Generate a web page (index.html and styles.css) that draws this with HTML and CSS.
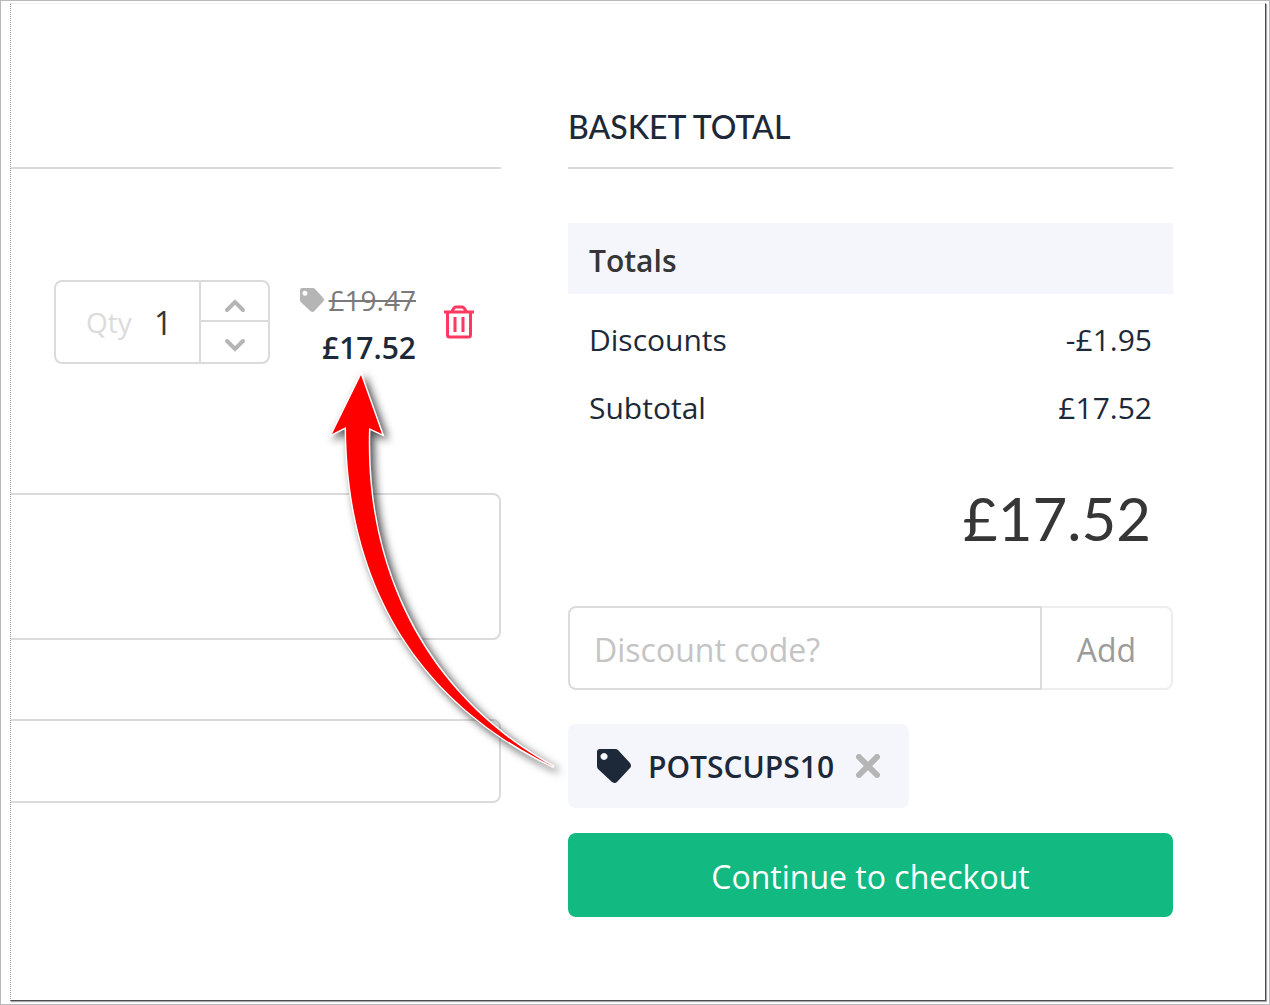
FILE: index.html
```html
<!DOCTYPE html>
<html lang="en">
<head>
    <meta charset="UTF-8">
    <meta name="viewport" content="width=device-width, initial-scale=1.0">
    <title>Basket</title>
    <link rel="stylesheet" href="styles.css">
</head>
<body>
    <div class="frame">
        <main class="sheet">
            <section class="items">
                <div class="column-head"></div>

                <div class="item">
                    <div class="qty">
                        <label for="qty">Qty</label>
                        <input type="text" id="qty" name="qty" value="1">
                        <div class="qty-steps">
                            <button type="button" aria-label="Increase quantity">
                                <svg width="22" height="14" viewBox="0 0 22 14"><path d="M3 11l8-8 8 8"/></svg>
                            </button>
                            <button type="button" aria-label="Decrease quantity">
                                <svg width="22" height="14" viewBox="0 0 22 14"><path d="M3 3l8 8 8-8"/></svg>
                            </button>
                        </div>
                    </div>
                    <div class="prices">
                        <div class="old-price">
                            <svg width="24" height="24" viewBox="0 0 34 34"><path fill-rule="evenodd" d="M3 0h15q2 0 3 1l12 13q2 3 0 5L20 33q-2 2-5 0L1 20q-1-1-1-3V3q0-3 3-3zM7 4a3.500 3.500 0 1 0 .1 0z"/></svg>
                            <s>£19.47</s>
                        </div>
                        <div class="new-price">£17.52</div>
                    </div>
                    <button type="button" class="remove" aria-label="Remove item">
                        <svg width="30" height="34" viewBox="0 0 30 34"><path d="M0 7h30M3.500 7v23q0 2 2 2h19q2 0 2-2V7M8 6l2-3q1-1 2-1h6q1 0 2 1l2 3"/><path d="M11 12v15M19 12v15"/></svg>
                    </button>
                </div>

                <textarea class="field note" aria-label="Order note"></textarea>
                <input type="text" class="field" aria-label="Reference">

                <svg class="arrow" width="250" height="420" viewBox="320 360 250 420">
                    <path d="M361 375L382 434L369 428C364 580 434 701 554 767C431 708 347 600 346 427L332 434Z"/>
                </svg>
            </section>

            <section class="summary">
                <h2 class="column-head">BASKET TOTAL</h2>

                <table class="totals">
                    <thead>
                        <tr><th colspan="2">Totals</th></tr>
                    </thead>
                    <tbody>
                        <tr><td>Discounts</td><td>-£1.95</td></tr>
                        <tr><td>Subtotal</td><td>£17.52</td></tr>
                    </tbody>
                </table>
                <div class="grand-total">£17.52</div>

                <form class="discount">
                    <input type="text" name="code" placeholder="Discount code?" aria-label="Discount code">
                    <button type="button">Add</button>
                </form>

                <div class="coupon">
                    <svg width="34" height="34" viewBox="0 0 34 34"><path fill-rule="evenodd" d="M3 0h15q2 0 3 1l12 13q2 3 0 5L20 33q-2 2-5 0L1 20q-1-1-1-3V3q0-3 3-3zM7 4a3.500 3.500 0 1 0 .1 0z"/></svg>
                    <span>POTSCUPS10</span>
                    <button type="button" aria-label="Remove discount">
                        <svg width="24" height="24" viewBox="0 0 24 24"><path d="M3 3l18 18M21 3L3 21"/></svg>
                    </button>
                </div>

                <button type="button" class="checkout">Continue to checkout</button>
            </section>
        </main>
    </div>
</body>
</html>
```
FILE: styles.css
```css
* {
    box-sizing: border-box;
}
body {
    margin: 0;
    font-family: "Open Sans", "Noto Sans", sans-serif;
    font-size: 30px;
    color: #1d2939;
    background-color: #fff;
}
button, input, textarea {
    font: inherit;
    color: inherit;
    background: none;
    border: none;
    border-radius: 0;
    margin: 0;
    padding: 0;
    outline: none;
}
button {
    cursor: pointer;
}
svg {
    display: block;
    flex: none;
}
.frame {
    display: flex;
    min-height: 100vh;
    padding: 2px 3px 3px 9px;
    border: 1px solid #b9b9bb;
}
.sheet {
    flex: 1;
    display: grid;
    grid-template-columns: 490fr 605fr;
    column-gap: 67px;
    align-items: start;
    padding: 100px 92px 80px 0;
    border: 1px solid #4a4a4c;
    border-top-color: #efeff0;
    border-left: 1px dotted #9a9a9a;
    box-shadow: 1px 1px 1px #aaa;
}
.column-head {
    height: 65px;
    margin: 0;
    border-bottom: 2px solid #dbdbdb;
    font-family: Lato, sans-serif;
    font-size: 32px;
    font-weight: 500;
    line-height: 46px;
}

/* left column */
.items {
    position: relative;
}
.item {
    display: flex;
    align-items: center;
    margin-top: 103px;
    padding-left: 43px;
}
.qty {
    display: flex;
    align-items: center;
    width: 216px;
    height: 84px;
    border: 2px solid #dbdbdb;
    border-radius: 8px;
}
.qty label {
    width: 68px;
    margin-left: 30px;
    color: #dbdbdb;
    font-size: 28px;
}
.qty input {
    flex: 1;
    min-width: 0;
    color: #363636;
    font-size: 32px;
}
.qty-steps {
    display: flex;
    flex-direction: column;
    align-self: stretch;
    width: 69px;
    border-left: 2px solid #dbdbdb;
}
.qty-steps button {
    display: flex;
    align-items: center;
    justify-content: center;
    height: 38px;
    padding-top: 10px;
}
.qty-steps button + button {
    height: 42px;
    padding-top: 6px;
    border-top: 2px solid #dbdbdb;
}
.qty-steps path {
    fill: none;
    stroke: #b5b5b5;
    stroke-width: 4;
    stroke-linecap: round;
}
.prices {
    flex: 1;
    padding-top: 4px;
    text-align: right;
    line-height: 48px;
}
.old-price {
    display: flex;
    align-items: center;
    justify-content: flex-end;
    gap: 5px;
    color: #7a7a7a;
    font-size: 28px;
}
.old-price s {
    text-decoration-thickness: 2px;
}
.old-price svg {
    fill: #b5b5b5;
}
.new-price {
    font-weight: 600;
    font-size: 30px;
}
.remove {
    margin: 0 27px 0 28px;
}
.remove path {
    fill: none;
    stroke: #ff3860;
    stroke-width: 3;
}
.field {
    display: block;
    width: 100%;
    height: 84px;
    margin-top: 79px;
    padding: 16px 24px;
    border: 2px solid #dbdbdb;
    border-left: none;
    border-radius: 0 8px 8px 0;
}
.note {
    height: 147px;
    margin-top: 121px;
    resize: none;
}
.arrow {
    position: absolute;
    left: 309px;
    top: 256px;
    filter: drop-shadow(4px 4px 4px rgba(0, 0, 0, 0.7));
    pointer-events: none;
}
.arrow path {
    fill: #f00;
    stroke: #fff;
    stroke-width: 3;
    paint-order: stroke;
}

/* right column */
.totals {
    width: 100%;
    margin-top: 54px;
    border-collapse: collapse;
}
.totals th {
    height: 71px;
    padding: 4px 21px 0;
    background-color: #f4f6fb;
    color: #363636;
    font-weight: 600;
    text-align: left;
}
.totals td {
    height: 68px;
    padding: 0 21px 2px;
}
.totals tbody::before {
    content: "";
    display: block;
    height: 12px;
}
.totals td:last-child {
    text-align: right;
}
.grand-total {
    margin-top: 36px;
    padding-right: 22px;
    color: #363636;
    font-family: Lato, sans-serif;
    font-size: 60px;
    line-height: 80px;
    text-align: right;
}
.discount {
    display: flex;
    height: 84px;
    margin: 48px 0 34px;
    font-size: 32px;
}
.discount input {
    flex: 1;
    min-width: 0;
    padding: 2px 24px 0;
    border: 2px solid #dbdbdb;
    border-radius: 8px 0 0 8px;
}
.discount input::placeholder {
    color: #c4c4c4;
    opacity: 1;
}
.discount button {
    width: 131px;
    padding-top: 2px;
    border: 2px solid #ededed;
    border-left: none;
    border-radius: 0 8px 8px 0;
    color: #9b9b9b;
}
.coupon {
    display: inline-flex;
    align-items: center;
    height: 84px;
    padding: 0 29px;
    border-radius: 8px;
    background-color: #f4f6fb;
    vertical-align: top;
    font-weight: 600;
}
.coupon > svg {
    fill: #1d2939;
}
.coupon span {
    margin: 0 22px 0 17px;
}
.coupon path {
    stroke-linecap: round;
}
.coupon button path {
    stroke: #b5b5b5;
    stroke-width: 6;
}
.checkout {
    display: block;
    width: 100%;
    height: 84px;
    margin-top: 25px;
    padding-top: 2px;
    border-radius: 8px;
    background-color: #12b981;
    color: #fff;
    font-size: 32px;
}
.checkout:hover {
    background-color: #10a874;
}
```
